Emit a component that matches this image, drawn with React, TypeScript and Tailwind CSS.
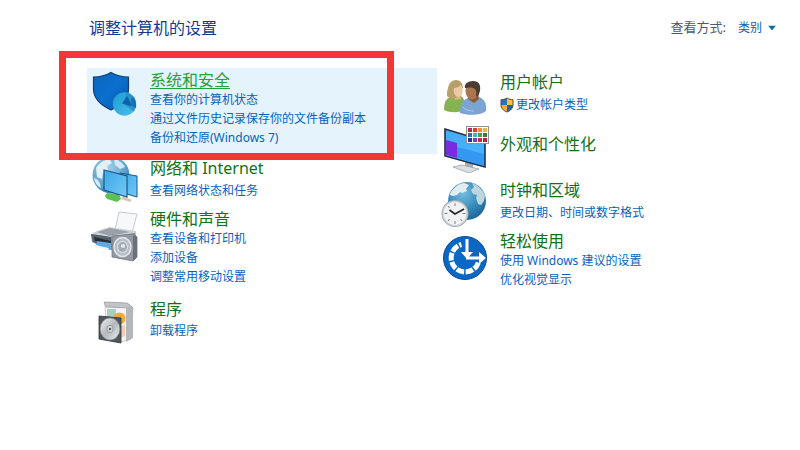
import { useState } from 'react';
import type { ReactNode } from 'react';

type Category = {
  id: string;
  title: string;
  links: string[];
  icon: ReactNode;
  rowClass: string;
  iconClass?: string;
  textClass?: string;
  linksClass?: string;
  shield?: boolean;
};

function SecurityIcon() {
  return (
    <svg viewBox="0 0 48 48" className="w-12 h-12" aria-hidden="true">
      <defs>
        <linearGradient id="shieldFill" x1="0" y1="0" x2="1" y2="1">
          <stop offset="0" stopColor="#0b66bb" />
          <stop offset="0.5" stopColor="#0a6fcf" />
          <stop offset="1" stopColor="#0757a8" />
        </linearGradient>
        <linearGradient id="pieFill" x1="0" y1="0" x2="1" y2="1">
          <stop offset="0" stopColor="#1b9bd3" />
          <stop offset="1" stopColor="#4fc0ea" />
        </linearGradient>
      </defs>
      <path d="M21 2.500c5.500 3.200 10 4.500 17.500 4.500v12c0 9-6 15.500-17.500 21C9.500 34.500 3.500 28 3.500 19V7C10 7 15.500 5.700 21 2.500Z" fill="url(#shieldFill)" stroke="#123f73" strokeWidth="1.200" />
      <circle cx="34.500" cy="34" r="11.700" fill="url(#pieFill)" />
      <path d="M36 22.500c6 1 10 6 10 11.500 0 3-1 5.500-2.500 7.500L34 34Z" fill="#2794cb" />
      <path d="M37 26l-5 7.500 8 2.500 2-1Z" fill="#1160aa" />
      <path d="M41 29l1 7 4 2c.600-4-.500-8-3-11Z" fill="#1670b5" />
    </svg>
  );
}

function NetworkIcon() {
  return (
    <svg viewBox="0 0 48 48" className="w-12 h-12" aria-hidden="true">
      <defs>
        <linearGradient id="screenFill" x1="0" y1="0" x2="1" y2="1">
          <stop offset="0" stopColor="#3ba6e8" />
          <stop offset="1" stopColor="#74caf5" />
        </linearGradient>
        <radialGradient id="netGlobe" cx="0.400" cy="0.300" r="0.800">
          <stop offset="0" stopColor="#a7d2ea" />
          <stop offset="0.600" stopColor="#5ba4cf" />
          <stop offset="1" stopColor="#2c78ad" />
        </radialGradient>
      </defs>
      <circle cx="21" cy="19" r="18.500" fill="url(#netGlobe)" />
      <path d="M6 12c3-5 8-8 13-9l3 4-5 3 1 4-5 3-1 6-5-2Z" fill="#e3f0f6" />
      <path d="M24 3c5 1 9 4 11 8l-5 2-5-4Z" fill="#d6e9f3" />
      <path d="M4 22c4 1 6 4 7 10-4-2-6-5-7-10Z" fill="#dcecf4" />
      <path d="M17 37l12 1 2 5-4 3-10-3-2-3Z" fill="#5cc154" />
      <path d="M33 40l9 4-2 2-9-3Z" fill="#d4c9a8" />
      <path d="M30 17l17 3v21l-17-5Z" fill="url(#screenFill)" stroke="#1b5788" strokeWidth="1" />
      <path d="M14 14l23 6v21L14 34Z" fill="url(#screenFill)" stroke="#1b5788" strokeWidth="1.200" />
    </svg>
  );
}

function HardwareIcon() {
  return (
    <svg viewBox="0 0 48 52" className="w-12 h-[52px]" aria-hidden="true">
      <path d="M29 1l18 2-5 19-17-3Z" fill="#f7f8f9" stroke="#b9bec4" strokeWidth="0.800" />
      <path d="M2 22l17-6 27 4v9l-28 2Z" fill="#cdd1d5" />
      <path d="M7 21l13-4 20 4-20 4Z" fill="#9aa0a7" />
      <path d="M1 23l19 3 25-4 2 8-3 6-24 3L2 31Z" fill="#868d95" />
      <path d="M1 23l20 3v12L3 31Z" fill="#59616b" />
      <path d="M4 26l17 4v4L5 30Z" fill="#232d3a" />
      <path d="M7 30l14 2v7L6 34Z" fill="#5fa9de" />
      <path d="M5 34l14 3-1 2-12-3Z" fill="#e6f3fb" />
      <path d="M22 25l22-2 3 3v20l-4 4-21-4Z" fill="#9299a1" stroke="#737a82" strokeWidth="0.800" />
      <path d="M43 24l4 2v20l-4 4Z" fill="#6a717a" />
      <ellipse cx="32.500" cy="36" rx="8.500" ry="9.500" fill="#b8bfc6" stroke="#e3e6e9" strokeWidth="1.500" />
      <ellipse cx="32.500" cy="36" rx="5" ry="5.600" fill="#a3abb3" stroke="#d9dde1" strokeWidth="1.200" />
      <circle cx="33" cy="35" r="2" fill="#e6eaed" />
    </svg>
  );
}

function ProgramsIcon() {
  return (
    <svg viewBox="0 0 48 48" className="w-12 h-12" aria-hidden="true">
      <defs>
        <linearGradient id="discFill" x1="0" y1="0" x2="1" y2="1">
          <stop offset="0" stopColor="#f3f4f5" />
          <stop offset="0.500" stopColor="#b3b8bb" />
          <stop offset="1" stopColor="#eef0f1" />
        </linearGradient>
      </defs>
      <path d="M15 4l24 1 4 4-2 31-10 3-15-4Z" fill="#f3f3f3" stroke="#c0c0c0" strokeWidth="0.800" />
      <path d="M14 3l23 1 6 5-27-1Z" fill="#c3c4c7" stroke="#9a9da0" strokeWidth="0.800" />
      <path d="M36 8l7 1v30l-7 4Z" fill="#b4b6b9" />
      <path d="M17 10h9v8h-9Z" fill="#a9cdbf" />
      <circle cx="29.500" cy="19.500" r="6" fill="#f2a83c" />
      <path d="M28 28l7-2v11l-7 3Z" fill="#f3ccb6" />
      <path d="M9 17l22 2v25l-22-4Z" fill="#50565c" stroke="#2d3236" strokeWidth="0.800" />
      <ellipse cx="20" cy="30" rx="9.800" ry="11" fill="url(#discFill)" stroke="#858b90" strokeWidth="0.600" />
      <ellipse cx="20" cy="30" rx="3.200" ry="3.600" fill="#d6d9db" stroke="#858b90" strokeWidth="0.800" />
      <circle cx="20" cy="30" r="1.200" fill="#4b5156" />
    </svg>
  );
}

function UsersIcon() {
  return (
    <svg viewBox="0 0 48 48" className="w-12 h-12" aria-hidden="true">
      <path d="M4 37c0-8 2-11 6-13l9-2c5 2 6 5 6 15-7 3-15 3-21 0Z" fill="#86b351" />
      <path d="M13 21l7 0 1 5-6 1Z" fill="#dfb088" />
      <path d="M7 23c0-3 0-5 1-8 1-5 4-8 8-8 4 0 7 3 7 8l-3 1-4 9-5 1Z" fill="#b8a068" />
      <path d="M14 15c3 0 5-1 7-3 2 3 2 6 1 9 0 2-2 3-4 3-3-1-5-4-4-9Z" fill="#eec9a8" />
      <path d="M20 40c0-9 3-13 8-15l11-1c5 2 8 6 7 14-4 4-17 5-26 2Z" fill="#7ba4d2" />
      <path d="M29 22l9 0 1 4-5 4-6-4Z" fill="#8b5a37" />
      <ellipse cx="32" cy="18" rx="6.500" ry="8.500" fill="#a9764f" />
      <path d="M25 15c-1-4 3-7 8-7 6 0 8 4 7 10l-2 6-2-1c1-4 0-7-3-8-3-1-5 0-8 0Z" fill="#4a3c30" />
      <path d="M23 34c2 3 6 4 11 4" fill="none" stroke="#a7c5e6" strokeWidth="1.200" />
    </svg>
  );
}

const swatches = ['#b5265c', '#df3b31', '#ed922e', '#efb43c', '#276fc3', '#3ab9b0', '#4a9d3f', '#3a7d34', '#252f9e', '#7442b8', '#cf2452', '#bc203f'];

function AppearanceIcon() {
  return (
    <svg viewBox="0 0 50 48" className="w-[50px] h-12" aria-hidden="true">
      <defs>
        <linearGradient id="monitorFill" x1="0" y1="0" x2="0" y2="1">
          <stop offset="0" stopColor="#4aabf5" />
          <stop offset="1" stopColor="#3fb8fb" />
        </linearGradient>
      </defs>
      <path d="M25 37l8 2v5l-8-2Z" fill="#a4abb2" />
      <path d="M13 42l9-2 17 4-10 4Z" fill="#dde0e3" stroke="#9da3aa" strokeWidth="0.800" />
      <path d="M5 4l40 12v26L5 31Z" fill="url(#monitorFill)" stroke="#222f47" strokeWidth="1.600" />
      <path d="M6 15l11 3v15L6 30Z" fill="#782be0" />
      <path d="M17 33V22l27 7v12Z" fill="#2b86ef" opacity="0.600" />
      <rect x="26.500" y="1.500" width="22" height="17" fill="#ffffff" stroke="#8f9295" />
      {swatches.map((color, i) => (
        <rect key={color} x={28 + (i % 4) * 5} y={3 + Math.floor(i / 4) * 5} width="4" height="4" fill={color} />
      ))}
    </svg>
  );
}

function ClockIcon() {
  return (
    <svg viewBox="0 0 48 48" className="w-12 h-12" aria-hidden="true">
      <defs>
        <radialGradient id="clockGlobe" cx="0.400" cy="0.300" r="0.750">
          <stop offset="0" stopColor="#74bee0" />
          <stop offset="0.600" stopColor="#3388b8" />
          <stop offset="1" stopColor="#1d6495" />
        </radialGradient>
      </defs>
      <circle cx="27" cy="20" r="19" fill="url(#clockGlobe)" />
      <path d="M10 13c3-6 8-10 14-11l5 2-3 4 1 2-5 2-2-1-3 3-4 1-3-1Z" fill="#e3edf0" />
      <path d="M32 2c7 3 11 7 13 13l-1 5-3 4-3-1-2-6 1-3-4-1-2-4 3-3Z" fill="#bdd6df" />
      <circle cx="15" cy="32.500" r="13.500" fill="#a3a9ae" />
      <circle cx="15" cy="32.500" r="12" fill="#f1f2f3" stroke="#cfd3d6" strokeWidth="1.200" />
      <path d="M15 22v3M15 40v3M4.500 32.500h3M22.500 32.500h3M8 25l1.500 2M22 40l-1.500-2M8 40l1.500-2" stroke="#7d8388" strokeWidth="1" />
      <path d="M9.500 29l5.500 4 9-5" fill="none" stroke="#22272b" strokeWidth="1.600" />
    </svg>
  );
}

function EaseIcon() {
  return (
    <svg viewBox="0 0 48 48" className="w-12 h-12" aria-hidden="true">
      <circle cx="25" cy="24" r="21.500" fill="#0a68c4" stroke="#0a4a91" strokeWidth="1" />
      <path d="M38.400 28.600A14 14 0 1 1 21.400 10.500" fill="none" stroke="#ffffff" strokeWidth="5" strokeDasharray="7.600 1.500" />
      <path d="M25.500 5h3v13h4.500L27 25l-6-7h4.500Z" fill="#ffffff" />
      <path d="M26 22.500h13V18l7 6-7 6v-4.500H26Z" fill="#ffffff" />
    </svg>
  );
}

function UacShield() {
  return (
    <svg viewBox="0 0 14 16" className="w-3.5 h-4 shrink-0" aria-hidden="true">
      <path d="M7 1C5 2.200 3 2.700 1 2.700V8h6Z" fill="#2d6fc0" />
      <path d="M7 1c2 1.200 4 1.700 6 1.700V8H7Z" fill="#f5c33b" />
      <path d="M1 8c0 3 2 5.500 6 7V8Z" fill="#f0b42c" />
      <path d="M13 8c0 3-2 5.500-6 7V8Z" fill="#2760ae" />
      <path d="M7 1c2 1.200 4 1.700 6 1.700V8c0 3-2 5.500-6 7-4-1.500-6-4-6-7V2.700C3 2.700 5 2.200 7 1Z" fill="none" stroke="#4d4a42" strokeWidth="1" />
    </svg>
  );
}

const leftCategories: Category[] = [
  {
    id: 'security',
    title: '系统和安全',
    links: ['查看你的计算机状态', '通过文件历史记录保存你的文件备份副本', '备份和还原(Windows 7)'],
    icon: <SecurityIcon />,
    rowClass: 'pb-[7px]',
  },
  {
    id: 'network',
    title: '网络和 Internet',
    links: ['查看网络状态和任务'],
    icon: <NetworkIcon />,
    rowClass: 'pb-[3px]',
    textClass: 'pt-0.5',
    linksClass: 'mt-[3px]',
  },
  {
    id: 'hardware',
    title: '硬件和声音',
    links: ['查看设备和打印机', '添加设备', '调整常用移动设置'],
    icon: <HardwareIcon />,
    rowClass: 'pb-[11px]',
    iconClass: 'pt-0.5',
  },
  {
    id: 'programs',
    title: '程序',
    links: ['卸载程序'],
    icon: <ProgramsIcon />,
    rowClass: '',
    linksClass: 'mt-0.5',
  },
];

const rightCategories: Category[] = [
  {
    id: 'users',
    title: '用户帐户',
    links: ['更改帐户类型'],
    icon: <UsersIcon />,
    rowClass: 'pb-0.5',
    iconClass: 'pt-[3px]',
    textClass: 'pt-0.5',
    linksClass: 'mt-[3px]',
    shield: true,
  },
  {
    id: 'appearance',
    title: '外观和个性化',
    links: [],
    icon: <AppearanceIcon />,
    rowClass: 'pb-[5px]',
    textClass: 'pt-[9px]',
  },
  {
    id: 'clock',
    title: '时钟和区域',
    links: ['更改日期、时间或数字格式'],
    icon: <ClockIcon />,
    rowClass: '',
    iconClass: 'pt-px',
    linksClass: 'mt-[3px]',
  },
  {
    id: 'ease',
    title: '轻松使用',
    links: ['使用 Windows 建议的设置', '优化视觉显示'],
    icon: <EaseIcon />,
    rowClass: '',
    iconClass: 'pt-[3px]',
  },
];

function CategoryRow({ category, active }: { category: Category; active?: boolean }) {
  return (
    <li className={`relative flex items-start gap-3 pl-[3px] pt-0.5 ${category.rowClass} ${active ? 'bg-[#e5f3fd]' : ''}`}>
      <div className={`w-12 shrink-0 ${category.iconClass ?? ''}`}>
        <div className="w-max">{category.icon}</div>
      </div>
      <div className={category.textClass ?? ''}>
        <h2 className="text-base leading-5">
          <a
            href={`#${category.id}`}
            className={active ? 'text-[#25a03a] underline underline-offset-2' : 'text-[#0f7216] hover:underline'}
          >
            {category.title}
          </a>
        </h2>
        <ul className={category.linksClass ?? ''}>
          {category.links.map((link) => (
            <li key={link} className="flex items-center gap-0.5 text-xs leading-[19px]">
              {category.shield && <UacShield />}
              <a href={`#${category.id}`} className="text-[#0663bd] hover:underline whitespace-nowrap">
                {link}
              </a>
            </li>
          ))}
        </ul>
      </div>
      {active && (
        <div className="absolute z-10 -left-7 right-[43px] -top-[17px] -bottom-1.5 border-[7px] border-[#f23836] pointer-events-none" />
      )}
    </li>
  );
}

export default function App() {
  const [view, setView] = useState('category');

  return (
    <main className="min-h-screen bg-white font-['Noto_Sans','Noto_Sans_CJK_SC',sans-serif]">
      <header className="flex items-center justify-between pt-4 pb-7 pl-[89px] pr-6">
        <h1 className="text-base leading-6 text-[#123a94]">调整计算机的设置</h1>
        <div className="flex items-center gap-3 text-xs">
          <label htmlFor="view" className="text-[13px] text-[#4a5a70]">查看方式:</label>
          <div className="relative">
            <select
              id="view"
              value={view}
              onChange={(e) => setView(e.target.value)}
              className="appearance-none bg-transparent w-[38px] text-[#0663bd] focus:outline-none"
            >
              <option value="category">类别</option>
              <option value="large">大图标</option>
              <option value="small">小图标</option>
            </select>
            <svg viewBox="0 0 8 5" className="absolute right-0 top-1/2 -translate-y-1/2 w-2 h-[5px] pointer-events-none" aria-hidden="true">
              <path d="M0 0h8L4 5Z" fill="#0f6f9c" />
            </svg>
          </div>
        </div>
      </header>

      <div className="grid grid-cols-2 pl-[87px] pr-[13px]">
        <ul>
          {leftCategories.map((category) => (
            <CategoryRow key={category.id} category={category} active={category.id === 'security'} />
          ))}
        </ul>
        <ul>
          {rightCategories.map((category) => (
            <CategoryRow key={category.id} category={category} />
          ))}
        </ul>
      </div>
    </main>
  );
}
